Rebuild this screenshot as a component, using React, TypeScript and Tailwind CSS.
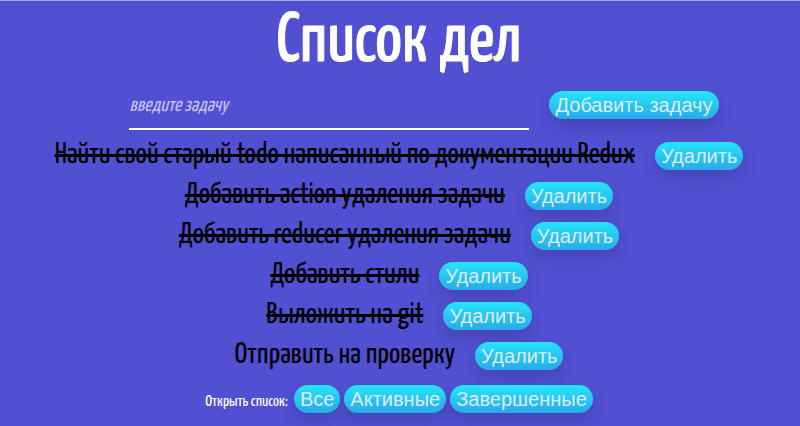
import { useState } from 'react';

type Todo = { id: number; title: string; done: boolean };

const initialTodos: Todo[] = [
  { id: 1, title: 'Найти свой старый todo написанный по документации Redux', done: true },
  { id: 2, title: 'Добавить action удаления задачи', done: true },
  { id: 3, title: 'Добавить reducer удаления задачи', done: true },
  { id: 4, title: 'Добавить стили', done: true },
  { id: 5, title: 'Выложить на git', done: true },
  { id: 6, title: 'Отправить на проверку', done: false },
];

function PillButton({ label, onClick }: { label: string; onClick?: () => void }) {
  return (
    <button
      type="button"
      onClick={onClick}
      className="h-7 shrink-0 cursor-pointer whitespace-nowrap rounded-full bg-linear-to-b from-[#27e5f9] to-[#29a9ea] px-1.5 font-['Liberation_Sans',Arial,sans-serif] text-[20px] leading-7 text-[#dcecfc] shadow-[0_8px_15px_rgba(0,0,0,0.15)]"
    >
      {label}
    </button>
  );
}

export default function App() {
  const [todos, setTodos] = useState(initialTodos);
  const [filter, setFilter] = useState('all');
  const [text, setText] = useState('');

  const visible = todos.filter((t) => filter === 'all' || (filter === 'done') === t.done);

  const addTodo = () => {
    if (!text.trim()) return;
    setTodos([...todos, { id: Date.now(), title: text, done: false }]);
    setText('');
  };

  return (
    <main className="flex min-h-screen flex-col items-center border-t border-[#a5abe3] bg-[#5150d3] pr-0.5 font-['Yanone_Kaffeesatz','Liberation_Sans_Narrow',sans-serif]">
      <h1 className="pt-1 text-[70px] leading-[75px] font-normal text-white [-webkit-text-stroke:1px_white]">Список дел</h1>

      <div className="flex items-center gap-5 pl-[50px]">
        <input
          aria-label="Новая задача"
          placeholder="введите задачу"
          value={text}
          onChange={(e) => setText(e.target.value)}
          className="h-[50px] w-[400px] border-b-2 border-white bg-transparent pt-1 text-[20px] text-white italic outline-none placeholder:text-[#c3bff0]"
        />
        <PillButton label="Добавить задачу" onClick={addTodo} />
      </div>

      <ul className="mt-[11px] flex flex-col items-center gap-3">
        {visible.map((t) => (
          <li key={t.id} className="flex h-7 items-baseline gap-5">
            <span className={`text-[30px] leading-7 text-black ${t.done ? 'line-through decoration-3' : ''}`}>{t.title}</span>
            <PillButton label="Удалить" onClick={() => setTodos(todos.filter((o) => o.id !== t.id))} />
          </li>
        ))}
      </ul>

      <div className="mt-4 flex items-baseline gap-1">
        <span className="pr-0.5 text-[16px] text-white">Открыть список:</span>
        <PillButton label="Все" onClick={() => setFilter('all')} />
        <PillButton label="Активные" onClick={() => setFilter('active')} />
        <PillButton label="Завершенные" onClick={() => setFilter('done')} />
      </div>
    </main>
  );
}
